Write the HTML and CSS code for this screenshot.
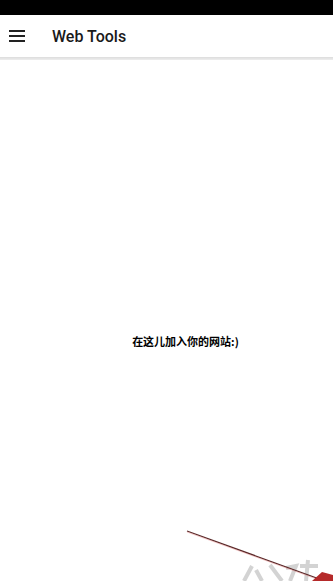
FILE: index.html
```html
<!DOCTYPE html>
<html lang="zh">
<head>
<meta charset="utf-8">
<link rel="stylesheet" href="styles.css">
</head>
<body>
<div class="app">
  <div class="status"></div>
  <header class="toolbar">
    <svg class="menu" width="16" height="12" viewBox="0 0 16 12">
      <rect x="0" y="0" width="16" height="2" fill="#222"/>
      <rect x="0" y="5" width="16" height="2" fill="#222"/>
      <rect x="0" y="10" width="16" height="2" fill="#222"/>
    </svg>
    <span class="title">Web Tools</span>
  </header>
  <div class="shadow"></div>
  <main class="content">
    <p class="msg">在这儿加入你的网站:)</p>
  </main>
  <svg class="overlay" width="333" height="581" viewBox="0 0 333 581">
    <g stroke="#c8c8c8" stroke-width="4" fill="none" opacity="0.8">
      <path d="M244 581 L252 566 M256 570 L262 581 M270 565 L282 581 M286 568 L296 566 L290 581 M300 566 L318 566 M308 560 L306 581"/>
    </g>
    <line x1="187" y1="531" x2="325" y2="581" stroke="#5a2a2a" stroke-width="1.2"/>
    <line x1="187" y1="532" x2="325" y2="582" stroke="#e07070" stroke-width="0.6" opacity="0.6"/>
    <path d="M312 581 L322 572 L333 575 L333 581 Z" fill="#b52a2a"/>
  </svg>
</div>
</body>
</html>
```
FILE: styles.css
```css
html, body {
  margin: 0;
  padding: 0;
  background: #fff;
}
.app {
  position: relative;
  width: 333px;
  height: 581px;
  display: flex;
  flex-direction: column;
  overflow: hidden;
  font-family: Roboto, "Noto Sans CJK SC", sans-serif;
}
.status {
  height: 15px;
  background: #000;
  flex: none;
}
.toolbar {
  height: 42px;
  flex: none;
  display: flex;
  align-items: center;
  padding-left: 9px;
  gap: 27px;
  background: #fff;
}
.menu {
  display: block;
}
.title {
  font-size: 16px;
  font-weight: 500;
  color: #1a1a1a;
}
.shadow {
  height: 3px;
  flex: none;
  background: linear-gradient(#dcdcdc, #eeeeee);
}
.content {
  flex: 1;
  display: flex;
  align-items: center;
  justify-content: center;
  padding-top: 40px;
  padding-left: 38px;
}
.msg {
  margin: 0;
  font-size: 11px;
  font-weight: 700;
  color: #000;
  font-family: "Noto Sans CJK SC", sans-serif;
}
.overlay {
  position: absolute;
  left: 0;
  top: 0;
  pointer-events: none;
}
```
